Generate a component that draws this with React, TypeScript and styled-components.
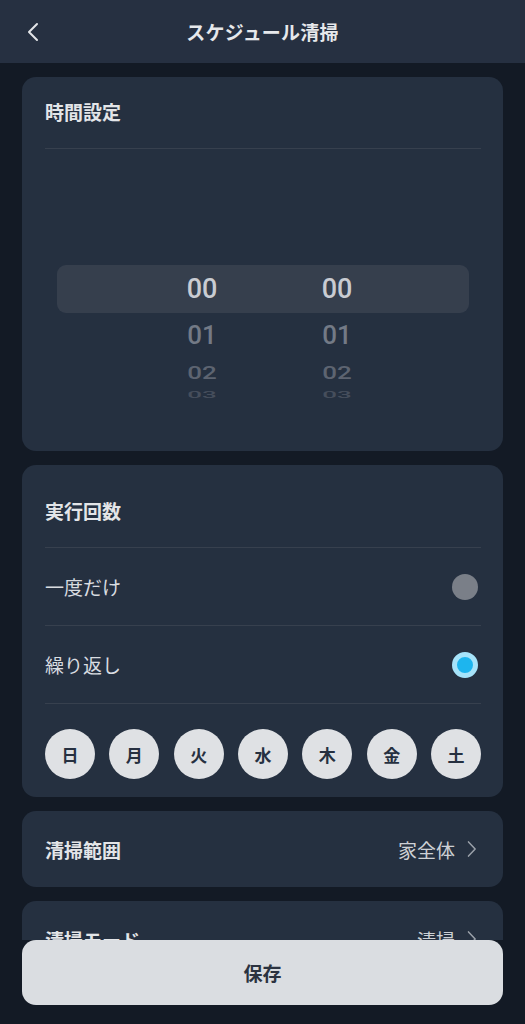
import React, { useState } from 'react';
import styled, { createGlobalStyle } from 'styled-components';

const FONT = `'Noto Sans CJK JP', 'Noto Sans', sans-serif`;
const NUM_FONT = `'Roboto', 'Noto Sans', sans-serif`;

const GlobalStyle = createGlobalStyle`
  html, body {
    margin: 0;
    padding: 0;
    background: #131a25;
  }
  * { box-sizing: border-box; }
`;

const Page = styled.div`
  min-height: 1100px;
  background: #131a25;
  font-family: ${FONT};
  color: #e3e5e8;
`;

const Header = styled.header`
  height: 63px;
  background: #263041;
  display: flex;
  align-items: center;
  justify-content: center;
  position: relative;
`;

const BackButton = styled.button`
  position: absolute;
  left: 20px;
  top: 50%;
  transform: translateY(-50%);
  width: 28px;
  height: 28px;
  background: none;
  border: 0;
  padding: 0;
  display: flex;
  align-items: center;
  justify-content: center;
`;

const Title = styled.h1`
  margin: 0;
  font-size: 19px;
  font-weight: 700;
  color: #e6e8eb;
  letter-spacing: 0.2px;
`;

const Content = styled.main`
  display: flex;
  flex-direction: column;
  gap: 14px;
  padding: 14px 22px 120px;
`;

const Card = styled.section`
  background: #253040;
  border-radius: 14px;
  padding: 0 22px 0 23px;
`;

const CardTitle = styled.div<{ $top: number }>`
  padding-top: ${({ $top }) => $top}px;
  padding-bottom: 24px;
  line-height: 24px;
  font-size: 19px;
  font-weight: 700;
  color: #e3e5e8;
  border-bottom: 1px solid #37404e;
`;

const Wheel = styled.div`
  padding: 116px 0 50px;
  margin: 0 12px;
`;

const Highlight = styled.div`
  height: 48px;
  border-radius: 9px;
  background: #363f4d;
`;

const WheelRow = styled.div<{ $h: number; $scale: number; $color: string }>`
  height: ${({ $h }) => $h}px;
  display: flex;
  align-items: center;
  padding-left: 105px;
  gap: 55px;
  color: ${({ $color }) => $color};
  & > span {
    transform: scaleY(${({ $scale }) => $scale});
  }
`;

const Digit = styled.span<{ $size: number; $weight?: number }>`
  width: 80px;
  text-align: center;
  font-family: ${NUM_FONT};
  font-size: ${({ $size }) => $size}px;
  font-weight: ${({ $weight }) => $weight ?? 500};
  line-height: 1;
`;

const OptionRow = styled.div`
  height: 78px;
  display: flex;
  align-items: center;
  justify-content: space-between;
  border-bottom: 1px solid #37404e;
  font-size: 19px;
  color: #d9dce0;
`;

const Radio = styled.span<{ $on: boolean }>`
  width: 26px;
  height: 26px;
  border-radius: 50%;
  margin-right: 3px;
  background: ${({ $on }) => ($on ? '#1db5ee' : '#7a7f88')};
  border: ${({ $on }) => ($on ? '5px solid #a6e3fa' : '0')};
`;

const Days = styled.div`
  display: flex;
  justify-content: space-between;
  padding: 25px 0 18px;
`;

const Day = styled.button`
  width: 50px;
  height: 50px;
  border-radius: 50%;
  border: 0;
  background: #dfe1e4;
  color: #263040;
  font-family: ${FONT};
  font-size: 17px;
  font-weight: 700;
  padding: 0;
`;

const LinkRow = styled.div`
  height: 76px;
  display: flex;
  align-items: center;
  justify-content: space-between;
`;

const LinkLabel = styled.span`
  font-size: 19px;
  font-weight: 700;
  color: #e3e5e8;
`;

const LinkValue = styled.span`
  display: flex;
  align-items: center;
  gap: 6px;
  font-size: 19px;
  color: #cdd0d5;
`;

const Footer = styled.footer`
  position: fixed;
  left: 0;
  right: 0;
  bottom: 0;
  padding: 0 22px 19px;
  background: #131a25;
`;

const SaveButton = styled.button`
  width: 100%;
  height: 65px;
  border: 0;
  border-radius: 14px;
  background: #dadde1;
  color: #2b3340;
  font-family: ${FONT};
  font-size: 19px;
  font-weight: 700;
`;

const Chevron = ({ color, size }: { color: string; size: number }) => (
  <svg width={size} height={size} viewBox="0 0 24 24" fill="none">
    <path d="M9 3.5l8 8.5-8 8.5" stroke={color} strokeWidth={1.8} strokeLinecap="round" strokeLinejoin="round" />
  </svg>
);

const wheelRows = [
  { v: '01', h: 44, scale: 1, size: 26, color: '#737a86' },
  { v: '02', h: 32, scale: 0.72, size: 26, color: '#5d6471' },
  { v: '03', h: 12, scale: 0.36, size: 26, color: '#464e5c' },
];

const days = ['日', '月', '火', '水', '木', '金', '土'];

export default function App() {
  const [repeat, setRepeat] = useState(true);

  return (
    <Page>
      <GlobalStyle />
      <Header>
        <BackButton aria-label="back">
          <svg width="24" height="24" viewBox="0 0 24 24" fill="none">
            <path d="M15 4l-8 8 8 8" stroke="#e3e5e8" strokeWidth={2} strokeLinecap="round" strokeLinejoin="round" />
          </svg>
        </BackButton>
        <Title>スケジュール清掃</Title>
      </Header>

      <Content>
        <Card>
          <CardTitle $top={23}>時間設定</CardTitle>
          <Wheel>
            <Highlight>
              <WheelRow $h={48} $scale={1} $color="#c9ccd2">
                <Digit $size={27}>00</Digit>
                <Digit $size={27}>00</Digit>
              </WheelRow>
            </Highlight>
            {wheelRows.map((r) => (
              <WheelRow key={r.v} $h={r.h} $scale={r.scale} $color={r.color}>
                <Digit $size={r.size}>{r.v}</Digit>
                <Digit $size={r.size}>{r.v}</Digit>
              </WheelRow>
            ))}
          </Wheel>
        </Card>

        <Card>
          <CardTitle $top={34}>実行回数</CardTitle>
          <OptionRow onClick={() => setRepeat(false)}>
            一度だけ
            <Radio $on={!repeat} />
          </OptionRow>
          <OptionRow onClick={() => setRepeat(true)}>
            繰り返し
            <Radio $on={repeat} />
          </OptionRow>
          <Days>
            {days.map((d) => (
              <Day key={d}>{d}</Day>
            ))}
          </Days>
        </Card>

        <Card>
          <LinkRow>
            <LinkLabel>清掃範囲</LinkLabel>
            <LinkValue>
              家全体
              <Chevron color="#9aa0a9" size={20} />
            </LinkValue>
          </LinkRow>
        </Card>

        <Card>
          <LinkRow>
            <LinkLabel>清掃モード</LinkLabel>
            <LinkValue>
              清掃
              <Chevron color="#9aa0a9" size={20} />
            </LinkValue>
          </LinkRow>
        </Card>
      </Content>

      <Footer>
        <SaveButton>保存</SaveButton>
      </Footer>
    </Page>
  );
}
